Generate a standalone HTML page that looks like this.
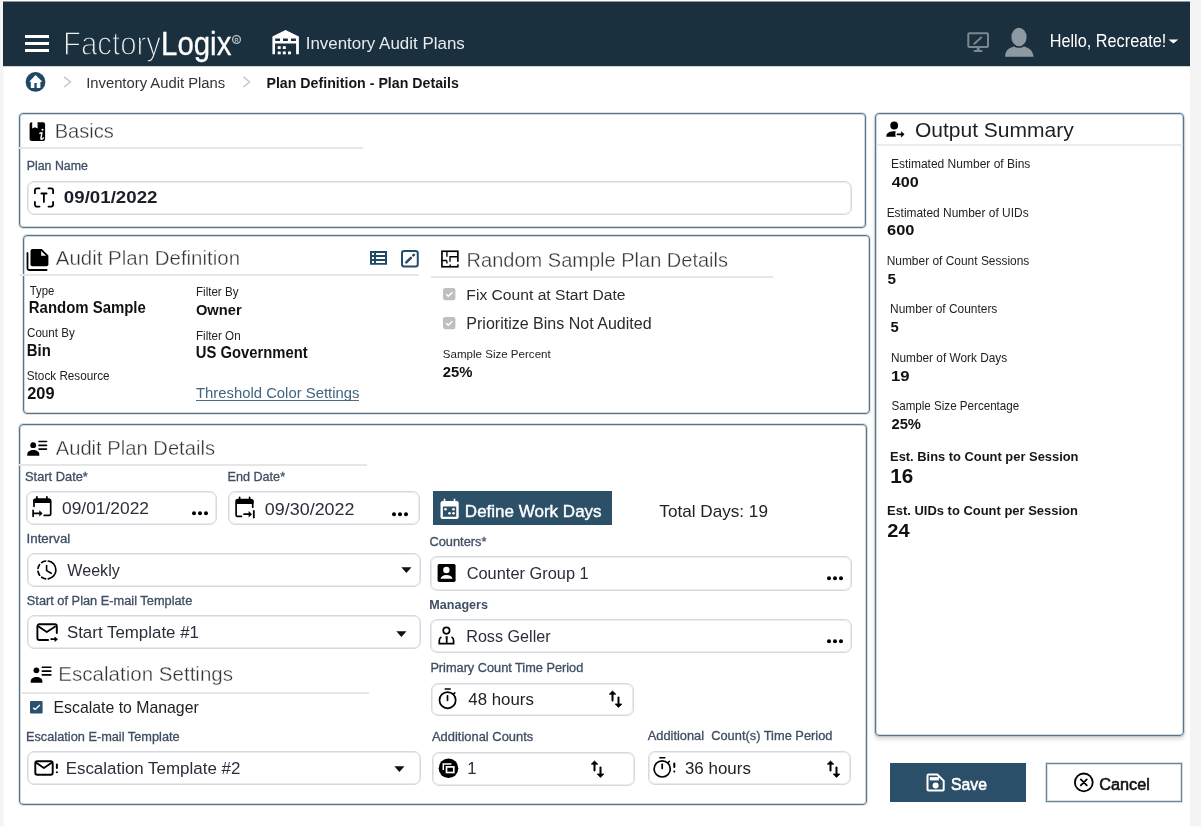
<!DOCTYPE html><html><head><meta charset="utf-8"><style>
html,body{margin:0;padding:0;width:1201px;height:826px;overflow:hidden;background:#f4f4f4;}
body{position:relative;font-family:"Liberation Sans", sans-serif;}
#w{position:absolute;left:0;top:0;width:1201px;height:826px;filter:blur(0.35px);}
.a{position:absolute;box-sizing:border-box;}
.t{position:absolute;line-height:1;white-space:pre;}
svg.a{overflow:visible;}
</style></head><body><div id="w">
<div class="a" style="left:3px;top:0px;width:1187px;height:826px;background:#fff;"></div>
<div class="a" style="left:3px;top:67px;width:1px;height:759px;background:#f9f9f9;"></div>
<div class="a" style="left:3px;top:2px;width:1187px;height:64px;background:#1b303e;"></div>
<div class="a" style="left:3px;top:1px;width:1187px;height:1px;background:#8d979e;"></div>
<div class="a" style="left:3px;top:66px;width:1187px;height:1px;background:#cfd4d7;"></div>
<div class="a" style="left:25px;top:35px;width:24px;height:2.799999999999997px;background:#fff;"></div>
<div class="a" style="left:25px;top:41.8px;width:24px;height:2.799999999999997px;background:#fff;"></div>
<div class="a" style="left:25px;top:48.8px;width:24px;height:2.799999999999997px;background:#fff;"></div>
<div class="t" style="left:63.0px;top:27.2px;font-size:33px;color:#eef1f3;transform:scaleX(0.891);transform-origin:0 0;"><span style="-webkit-text-stroke:1.3px #1b303e;paint-order:normal">Factory</span><span style="color:#fff;-webkit-text-stroke:0.3px #fff">Logix</span></div>
<svg class="a" style="left:231px;top:34px" width="11" height="11" viewBox="0 0 11 11"><circle cx="5.5" cy="5.5" r="3.9" fill="none" stroke="#b9c2c9" stroke-width="1.3"/><text x="5.6" y="7.6" font-size="5.5" text-anchor="middle" fill="#b9c2c9" font-family="Liberation Sans" font-weight="700">R</text></svg>
<svg class="a" style="left:265px;top:25px" width="40" height="35" viewBox="0 0 40 35"><path fill="#fff" d="M20.5 5.1 L33.9 11.4 V29.2 H31.1 V18.6 H10 V29.2 H7.4 V11.4 Z M10.2 13.6 V15.9 H15 V13.6 Z M18 13.6 V15.9 H22.9 V13.6 Z M26 13.6 V15.9 H30.9 V13.6 Z" fill-rule="evenodd"/>
<rect x="12.7" y="21.2" width="3" height="2.8" fill="#fff"/><rect x="17.8" y="21.2" width="3" height="2.8" fill="#fff"/>
<rect x="12.7" y="26.5" width="3" height="2.8" fill="#fff"/><rect x="17.8" y="26.5" width="3" height="2.8" fill="#fff"/><rect x="23" y="26.5" width="3" height="2.8" fill="#fff"/></svg>
<svg class="a" style="left:960px;top:22px" width="40" height="35" viewBox="0 0 40 35"><rect x="8.3" y="11.3" width="19.7" height="13.7" rx="1" fill="none" stroke="#7b868e" stroke-width="2"/>
<rect x="16.7" y="26" width="3" height="2.5" fill="#7b868e"/><rect x="13.7" y="28" width="8.6" height="2" fill="#7b868e"/>
<path d="M14.3 21.7 L21.2 15.5" stroke="#7b868e" stroke-width="2" stroke-linecap="round"/></svg>
<svg class="a" style="left:1000px;top:22px" width="40" height="40" viewBox="0 0 40 40"><ellipse cx="19" cy="15" rx="7.6" ry="9.3" fill="#8e9aa2"/>
<path d="M5 34.7 C5.5 29 8 26.5 12 25.2 L14 24.2 C16 26.2 22 26.2 24 24.2 L26 25.2 C30 26.5 32.8 29 33.6 34.7 Z" fill="#8e9aa2"/></svg>
<svg class="a" style="left:1168px;top:39px" width="11" height="5" viewBox="0 0 11 5"><path d="M0.5 0.4 H10.3 L5.4 4.6 Z" fill="#fff"/></svg>
<svg class="a" style="left:25px;top:71px" width="21" height="21" viewBox="0 0 21 21"><circle cx="10.5" cy="10.9" r="9.9" fill="#1e4864"/>
<path d="M10.6 3.9 L17.4 10.7 H15.4 V16.9 H11.7 V12.1 H9.4 V16.9 H5.8 V10.7 H4.2 Z" fill="#fff"/></svg>
<svg class="a" style="left:62px;top:75px" width="10" height="14" viewBox="0 0 10 14"><path d="M2.2 1.9 L8.4 7 L2.2 12" fill="none" stroke="#c9c9c9" stroke-width="1.6"/></svg>
<svg class="a" style="left:241px;top:75px" width="10" height="14" viewBox="0 0 10 14"><path d="M2.5 1.9 L8.5 7 L2.5 12" fill="none" stroke="#c9c9c9" stroke-width="1.6"/></svg>
<div class="a" style="left:19px;top:113px;width:847px;height:115px;border:1px solid #5a7588;border-radius:4px;box-shadow:0 0 0 1px rgba(90,117,136,0.22), inset 0 0 0 1px rgba(90,117,136,0.28);"></div>
<svg class="a" style="left:24px;top:116px" width="30" height="30" viewBox="0 0 30 30"><path d="M7.6 6.2 H8.2 V12.5 L10.9 11.2 L13.6 12.5 V6.2 H19.1 A2 2 0 0 1 21.1 8.2 V23.1 A2 2 0 0 1 19.1 25.1 H7.6 A2 2 0 0 1 5.6 23.1 V8.2 A2 2 0 0 1 7.6 6.2 Z" fill="#000"/>
<circle cx="18.5" cy="13.8" r="1.05" fill="#fff"/><path d="M15.9 17.4 Q16.9 16.6 18 16.6 L16.9 22.4 Q16.8 23.4 17.7 23.2 Q18.6 22.9 19.4 21.9" fill="none" stroke="#fff" stroke-width="1.45" stroke-linecap="round" stroke-linejoin="round"/></svg>
<div class="a" style="left:19px;top:147px;width:344px;height:2px;background:#e6e6e6;"></div>
<div class="a" style="left:26.8px;top:180.5px;width:825.7px;height:34.0px;border:1px solid #d6dae0;border-radius:7px;box-shadow:inset 0 0 0 1px rgba(200,206,214,0.4);"></div>
<svg class="a" style="left:28px;top:182px" width="32" height="30" viewBox="0 0 32 30"><path d="M6.9 11.2 V8.3 A2 2 0 0 1 8.9 6.3 H11.5 M20.5 6.3 H23.1 A2 2 0 0 1 25.1 8.3 V11.2 M25.1 19.8 V22.6 A2 2 0 0 1 23.1 24.6 H20.5 M11.5 24.6 H8.9 A2 2 0 0 1 6.9 22.6 V19.8" fill="none" stroke="#000" stroke-width="1.8" stroke-linecap="round"/><path d="M13.4 11.5 H18.6 M15.9 11.5 V19.9" fill="none" stroke="#000" stroke-width="1.8" stroke-linecap="round"/></svg>
<div class="a" style="left:23px;top:235px;width:847px;height:179px;border:1px solid #5a7588;border-radius:4px;box-shadow:0 0 0 1px rgba(90,117,136,0.22), inset 0 0 0 1px rgba(90,117,136,0.28);"></div>
<svg class="a" style="left:22px;top:244px" width="30" height="30" viewBox="0 0 30 30"><path d="M10.5 5 H19.8 L26.4 11.6 V20.3 A2 2 0 0 1 24.4 22.3 H10.5 A2 2 0 0 1 8.5 20.3 V7 A2 2 0 0 1 10.5 5 Z" fill="#000"/>
<path d="M19.2 7 V11.8 H24.1 Z" fill="#fff"/>
<path d="M5.5 9 V24.5 A1.5 1.5 0 0 0 7 26 H24.6" fill="none" stroke="#000" stroke-width="1.8" stroke-linecap="round"/></svg>
<div class="a" style="left:18.5px;top:274px;width:400.5px;height:2px;background:#e6e6e6;"></div>
<svg class="a" style="left:364px;top:244px" width="30" height="30" viewBox="0 0 30 30"><rect x="6" y="7" width="17" height="13.75" fill="#1e4a66"/>
<rect x="8" y="9" width="2" height="2" fill="#fff"/><rect x="12" y="9" width="9" height="2" fill="#fff"/>
<rect x="8" y="13" width="2" height="2" fill="#fff"/><rect x="12" y="13" width="9" height="2" fill="#fff"/>
<rect x="8" y="17" width="2" height="2" fill="#fff"/><rect x="12" y="17" width="9" height="2" fill="#fff"/></svg>
<svg class="a" style="left:394px;top:244px" width="30" height="30" viewBox="0 0 30 30"><rect x="8" y="7" width="15.75" height="15.5" rx="2.2" fill="none" stroke="#264c66" stroke-width="2"/>
<path d="M12.3 18.4 L16.9 13.8" stroke="#264c66" stroke-width="2.5" stroke-linecap="round"/><path d="M19.3 11.4 L19.9 10.8" stroke="#264c66" stroke-width="2.5" stroke-linecap="round"/></svg>
<div class="a" style="left:196.3px;top:400px;width:162.7px;height:1.3000000000000114px;background:#4a6e88;"></div>
<svg class="a" style="left:434px;top:244px" width="30" height="30" viewBox="0 0 30 30"><rect x="7.95" y="7.25" width="15.9" height="15.5" fill="none" stroke="#000" stroke-width="1.65"/>
<path d="M12.9 7.3 V12.7 M12.9 16.7 V19.6 M8 16.5 H12.9 M16 17.8 V12.7 H23 M16.2 20.4 V22.7" fill="none" stroke="#000" stroke-width="1.35"/>
<rect x="22.9" y="17.8" width="2" height="2.6" fill="#fff"/></svg>
<div class="a" style="left:430.7px;top:275.5px;width:342.3px;height:2.0px;background:#e6e6e6;"></div>
<svg class="a" style="left:442.8px;top:288.3px" width="13" height="13" viewBox="0 0 13 13"><rect x="0" y="0" width="12.4" height="12.2" rx="2.2" fill="#bfbfbf"/><path d="M3.2 6.3 L5.3 8.3 L9.4 4.2" fill="none" stroke="#fff" stroke-width="1.5"/></svg>
<svg class="a" style="left:442.8px;top:317.1px" width="13" height="13" viewBox="0 0 13 13"><rect x="0" y="0" width="12.4" height="12.2" rx="2.2" fill="#bfbfbf"/><path d="M3.2 6.3 L5.3 8.3 L9.4 4.2" fill="none" stroke="#fff" stroke-width="1.5"/></svg>
<div class="a" style="left:19px;top:424px;width:848px;height:381px;border:1px solid #5a7588;border-radius:4px;box-shadow:0 0 0 1px rgba(90,117,136,0.22), inset 0 0 0 1px rgba(90,117,136,0.28);"></div>
<svg class="a" style="left:22px;top:434px" width="30" height="30" viewBox="0 0 30 30"><circle cx="11.2" cy="11.2" r="2.9" fill="#000"/>
<path d="M5.25 21.7 V20.5 C5.25 17.5 8 15.9 11.3 15.9 C14.6 15.9 17.3 17.5 17.3 20.5 V21.7 Z" fill="#000"/>
<path d="M17 7.5 H24.5 M17 11.4 H24.5 M17 15.1 H24.5" stroke="#000" stroke-width="1.6" stroke-linecap="round"/></svg>
<div class="a" style="left:19px;top:463.5px;width:348px;height:2.0px;background:#e6e6e6;"></div>
<div class="a" style="left:25.5px;top:490.5px;width:191.5px;height:34.0px;border:1px solid #d6dae0;border-radius:7px;box-shadow:inset 0 0 0 1px rgba(200,206,214,0.4);"></div>
<svg class="a" style="left:28px;top:492px" width="30" height="30" viewBox="0 0 30 30"><path d="M6 14.3 V9 A1.8 1.8 0 0 1 7.8 7.2 H20.9 A1.8 1.8 0 0 1 22.7 9 V22 A1.5 1.5 0 0 1 21.2 23.4 H16.2" fill="none" stroke="#000" stroke-width="1.7" stroke-linecap="round"/>
<rect x="5.2" y="7.2" width="17.5" height="3.7" rx="1.2" fill="#000"/>
<path d="M8.9 4.8 V7.5 M18.9 4.8 V7.5" stroke="#000" stroke-width="1.7" stroke-linecap="round"/>
<path d="M5.1 18.3 V24.3 M5.5 21.4 H12.5" stroke="#000" stroke-width="1.7" stroke-linecap="round"/><path d="M11.3 18.2 L14.6 21.4 L11.3 24.6 Z" fill="#000"/></svg>
<svg class="a" style="left:191.8px;top:511.1px" width="18" height="5" viewBox="0 0 18 5"><circle cx="2" cy="2.3" r="2" fill="#000"/><circle cx="8" cy="2.3" r="2" fill="#000"/><circle cx="14" cy="2.3" r="2" fill="#000"/></svg>
<div class="a" style="left:228.3px;top:491.3px;width:191.5px;height:33.99999999999994px;border:1px solid #d6dae0;border-radius:7px;box-shadow:inset 0 0 0 1px rgba(200,206,214,0.4);"></div>
<svg class="a" style="left:230px;top:492px" width="30" height="30" viewBox="0 0 30 30"><path d="M22.7 15.2 V9.4 A1.8 1.8 0 0 0 20.9 7.6 H7.9 A1.8 1.8 0 0 0 6.1 9.4 V22.9 A1.5 1.5 0 0 0 7.6 24.4 H11.5" fill="none" stroke="#000" stroke-width="1.7" stroke-linecap="round"/>
<rect x="6.1" y="7.6" width="17.5" height="4.4" rx="1.2" fill="#000"/>
<path d="M9.6 5.3 V8 M19.6 5.3 V8" stroke="#000" stroke-width="1.7" stroke-linecap="round"/>
<path d="M14 22.2 H20" stroke="#000" stroke-width="1.7" stroke-linecap="round"/><path d="M18.6 18.9 L22 22.2 L18.6 25.6 Z" fill="#000"/><path d="M23.8 19 V25.6" stroke="#000" stroke-width="1.8" stroke-linecap="round"/></svg>
<svg class="a" style="left:392px;top:512px" width="18" height="5" viewBox="0 0 18 5"><circle cx="2" cy="2.3" r="2" fill="#000"/><circle cx="8" cy="2.3" r="2" fill="#000"/><circle cx="14" cy="2.3" r="2" fill="#000"/></svg>
<div class="a" style="left:27.2px;top:552.6px;width:394.3px;height:34.39999999999998px;border:1px solid #d6dae0;border-radius:7px;box-shadow:inset 0 0 0 1px rgba(200,206,214,0.4);"></div>
<svg class="a" style="left:32px;top:556px" width="30" height="30" viewBox="0 0 30 30"><path d="M16.31 5.01 A9.0 9.0 0 0 1 16.31 22.79 M9.61 6.62 A9.0 9.0 0 0 1 13.65 4.99 M6.01 12.49 A9.0 9.0 0 0 1 7.53 8.74 M7.62 19.19 A9.0 9.0 0 0 1 6.01 15.31 M13.65 22.81 A9.0 9.0 0 0 1 9.74 21.27" fill="none" stroke="#000" stroke-width="1.7" stroke-linecap="round"/><path d="M14.6 9.5 V14.6 L19.2 17.3" fill="none" stroke="#000" stroke-width="1.6" stroke-linecap="round" stroke-linejoin="round"/></svg>
<svg class="a" style="left:401px;top:567.2px" width="12" height="7" viewBox="0 0 12 7"><path d="M0.3 0.3 H10.5 L5.4 6 Z" fill="#111"/></svg>
<div class="a" style="left:27.2px;top:615.2px;width:394.3px;height:34.299999999999955px;border:1px solid #d6dae0;border-radius:7px;box-shadow:inset 0 0 0 1px rgba(200,206,214,0.4);"></div>
<svg class="a" style="left:32px;top:620px" width="30" height="26" viewBox="0 0 30 26"><path d="M16.1 20 H7.4 A2 2 0 0 1 5.4 18 V6.3 A2 2 0 0 1 7.4 4.3 H22.8 A2 2 0 0 1 24.8 6.3 V13" fill="none" stroke="#000" stroke-width="1.9" stroke-linecap="round"/>
<path d="M6.2 6.2 L14.8 12 L23.6 6.2" fill="none" stroke="#000" stroke-width="1.8" stroke-linejoin="round"/>
<path d="M19.2 19.2 H23.6" stroke="#000" stroke-width="1.7" stroke-linecap="round"/><path d="M22.9 17 L25.6 19.2 L22.9 21.5 Z" fill="#000" stroke="#000" stroke-width="0.6" stroke-linejoin="round"/></svg>
<svg class="a" style="left:396px;top:630.5px" width="12" height="7" viewBox="0 0 12 7"><path d="M0.3 0.3 H10.5 L5.4 6 Z" fill="#111"/></svg>
<svg class="a" style="left:22px;top:660px" width="32" height="30" viewBox="0 0 32 30"><circle cx="14.4" cy="10.3" r="2.9" fill="#000"/>
<path d="M8.7 22.7 V21.5 C8.7 18.5 11.3 16.9 14.5 16.9 C17.7 16.9 20.4 18.5 20.4 21.5 V22.7 Z" fill="#000"/>
<path d="M20.3 7.3 H28.9 M20.3 11.1 H28.9 M20.3 14.9 H28.9" stroke="#000" stroke-width="1.6" stroke-linecap="round"/></svg>
<div class="a" style="left:22px;top:691.5px;width:347px;height:2.0px;background:#e6e6e6;"></div>
<svg class="a" style="left:30.2px;top:701.2px" width="13" height="13" viewBox="0 0 13 13"><rect x="0" y="0" width="12.6" height="12.6" rx="1" fill="#2a5270"/><path d="M3.2 6.9 L5.2 8.4 L9.9 3.9" fill="none" stroke="#fff" stroke-width="1.4"/></svg>
<div class="a" style="left:26.5px;top:750.8px;width:394.3px;height:34.40000000000009px;border:1px solid #d6dae0;border-radius:7px;box-shadow:inset 0 0 0 1px rgba(200,206,214,0.4);"></div>
<svg class="a" style="left:30px;top:754px" width="32" height="28" viewBox="0 0 32 28"><rect x="5.3" y="7.2" width="17.4" height="13.6" rx="2" fill="none" stroke="#000" stroke-width="1.9"/>
<path d="M5.9 8.5 L13.9 14 L22 8.5" fill="none" stroke="#000" stroke-width="1.8" stroke-linejoin="round"/>
<path d="M26.9 10.5 V13.9" stroke="#000" stroke-width="2" stroke-linecap="round"/><circle cx="26.9" cy="18.3" r="1.05" fill="#000"/></svg>
<svg class="a" style="left:393.5px;top:766px" width="12" height="7" viewBox="0 0 12 7"><path d="M0.3 0.3 H10.5 L5.4 6 Z" fill="#111"/></svg>
<svg class="a" style="left:432.6px;top:491px" width="179" height="34" viewBox="0 0 179 34"><rect x="0" y="0" width="179" height="34" fill="#2b5068"/></svg>
<svg class="a" style="left:436px;top:494px" width="30" height="30" viewBox="0 0 30 30"><path d="M6.5 7.1 H20.7 A2 2 0 0 1 22.7 9.1 V23.1 A2 2 0 0 1 20.7 25.1 H6.5 A2 2 0 0 1 4.5 23.1 V9.1 A2 2 0 0 1 6.5 7.1 Z M6.9 12.4 V22.7 H20.2 V12.4 Z" fill="#fff" fill-rule="evenodd"/>
<path d="M8.5 5.2 V7.6 M18.5 5.2 V7.6" stroke="#fff" stroke-width="1.6" stroke-linecap="round"/>
<circle cx="9.5" cy="15.3" r="1.3" fill="#fff"/><circle cx="17.5" cy="15.3" r="1.3" fill="#fff"/><circle cx="13.5" cy="19.3" r="1.3" fill="#fff"/><circle cx="17.5" cy="19.3" r="1.3" fill="#fff"/></svg>
<div class="a" style="left:429.6px;top:556.2px;width:422.9px;height:34.59999999999991px;border:1px solid #d6dae0;border-radius:7px;box-shadow:inset 0 0 0 1px rgba(200,206,214,0.4);"></div>
<svg class="a" style="left:432px;top:560px" width="30" height="28" viewBox="0 0 30 28"><rect x="5.6" y="4.1" width="18" height="17.8" rx="1.6" fill="#000"/>
<circle cx="14.4" cy="10" r="3.2" fill="#fff"/><path d="M8.5 18.8 C8.9 16.3 11.3 14.9 14.5 14.9 C17.7 14.9 20.1 16.3 20.6 18.8 Z" fill="#fff"/></svg>
<svg class="a" style="left:827px;top:576.2px" width="18" height="5" viewBox="0 0 18 5"><circle cx="2" cy="2.3" r="2" fill="#000"/><circle cx="8" cy="2.3" r="2" fill="#000"/><circle cx="14" cy="2.3" r="2" fill="#000"/></svg>
<div class="a" style="left:429.6px;top:618.6px;width:422.9px;height:34.60000000000002px;border:1px solid #d6dae0;border-radius:7px;box-shadow:inset 0 0 0 1px rgba(200,206,214,0.4);"></div>
<svg class="a" style="left:432px;top:622px" width="30" height="28" viewBox="0 0 30 28"><circle cx="14.4" cy="8.6" r="3.2" fill="none" stroke="#000" stroke-width="1.7"/>
<path d="M9.4 15 C7.8 15.8 7.3 17 7.3 18.5 V21.7 H21.6 V18.5 C21.6 17 21.1 15.8 19.5 15" fill="none" stroke="#000" stroke-width="1.7"/>
<path d="M13.6 14.2 H15.8 L15.4 21.7 H14 Z" fill="#000"/></svg>
<svg class="a" style="left:827px;top:638.6px" width="18" height="5" viewBox="0 0 18 5"><circle cx="2" cy="2.3" r="2" fill="#000"/><circle cx="8" cy="2.3" r="2" fill="#000"/><circle cx="14" cy="2.3" r="2" fill="#000"/></svg>
<div class="a" style="left:430.7px;top:682.6px;width:203.3px;height:33.89999999999998px;border:1px solid #d6dae0;border-radius:7px;box-shadow:inset 0 0 0 1px rgba(200,206,214,0.4);"></div>
<svg class="a" style="left:434px;top:684px" width="30" height="30" viewBox="0 0 30 30"><circle cx="13.6" cy="16.2" r="8.1" fill="none" stroke="#000" stroke-width="1.7"/>
<path d="M11.2 5.1 H16.2" stroke="#000" stroke-width="1.5" stroke-linecap="round"/>
<path d="M19.3 10.2 L20.8 8.8" stroke="#000" stroke-width="1.6" stroke-linecap="round"/>
<path d="M13.5 11.8 V16.3" stroke="#000" stroke-width="1.7" stroke-linecap="round"/></svg>
<svg class="a" style="left:600px;top:684px" width="30" height="30" viewBox="0 0 30 30"><path d="M12.5 16.5 V9" stroke="#000" stroke-width="2" stroke-linecap="round"/><path d="M9.3 10.2 L12.5 7 L15.8 10.2 Z" fill="#000" stroke="#000" stroke-width="0.8" stroke-linejoin="round"/>
<path d="M18.5 13.5 V21" stroke="#000" stroke-width="2" stroke-linecap="round"/><path d="M15.2 20 L18.5 23.4 L21.8 20 Z" fill="#000" stroke="#000" stroke-width="0.8" stroke-linejoin="round"/></svg>
<div class="a" style="left:431.5px;top:751.5px;width:203.5px;height:34.0px;border:1px solid #d6dae0;border-radius:7px;box-shadow:inset 0 0 0 1px rgba(200,206,214,0.4);"></div>
<svg class="a" style="left:434px;top:754px" width="30" height="30" viewBox="0 0 30 30"><circle cx="14.5" cy="14.2" r="9.8" fill="#000"/>
<path d="M9.3 16 V9.9 H17.4" fill="none" stroke="#fff" stroke-width="1.5"/>
<rect x="12.5" y="12.9" width="7.3" height="5.6" fill="none" stroke="#fff" stroke-width="1.7"/></svg>
<svg class="a" style="left:582px;top:754px" width="30" height="30" viewBox="0 0 30 30"><path d="M12.5 16.5 V9" stroke="#000" stroke-width="2" stroke-linecap="round"/><path d="M9.3 10.2 L12.5 7 L15.8 10.2 Z" fill="#000" stroke="#000" stroke-width="0.8" stroke-linejoin="round"/>
<path d="M18.5 13.5 V21" stroke="#000" stroke-width="2" stroke-linecap="round"/><path d="M15.2 20 L18.5 23.4 L21.8 20 Z" fill="#000" stroke="#000" stroke-width="0.8" stroke-linejoin="round"/></svg>
<div class="a" style="left:647.9px;top:750.7px;width:203.10000000000002px;height:34.299999999999955px;border:1px solid #d6dae0;border-radius:7px;box-shadow:inset 0 0 0 1px rgba(200,206,214,0.4);"></div>
<svg class="a" style="left:648px;top:754px" width="34" height="30" viewBox="0 0 34 30"><circle cx="14.2" cy="14.9" r="8.1" fill="none" stroke="#000" stroke-width="1.7"/>
<path d="M11.9 3.7 H16.8" stroke="#000" stroke-width="1.5" stroke-linecap="round"/>
<path d="M20 8.7 L21.4 7.3" stroke="#000" stroke-width="1.6" stroke-linecap="round"/>
<path d="M14.2 10.3 V14.5" stroke="#000" stroke-width="1.7" stroke-linecap="round"/>
<path d="M26.3 9.5 V13" stroke="#000" stroke-width="2" stroke-linecap="round"/><circle cx="26.3" cy="17.6" r="1" fill="#000"/></svg>
<svg class="a" style="left:818px;top:754px" width="30" height="30" viewBox="0 0 30 30"><path d="M12.5 16.5 V9" stroke="#000" stroke-width="2" stroke-linecap="round"/><path d="M9.3 10.2 L12.5 7 L15.8 10.2 Z" fill="#000" stroke="#000" stroke-width="0.8" stroke-linejoin="round"/>
<path d="M18.5 13.5 V21" stroke="#000" stroke-width="2" stroke-linecap="round"/><path d="M15.2 20 L18.5 23.4 L21.8 20 Z" fill="#000" stroke="#000" stroke-width="0.8" stroke-linejoin="round"/></svg>
<div class="a" style="left:875px;top:113px;width:309px;height:623px;border:1px solid #5a7588;border-radius:4px;box-shadow:0 0 0 1px rgba(90,117,136,0.22), inset 0 0 0 1px rgba(90,117,136,0.28), 0 3px 4px rgba(0,0,0,0.16);"></div>
<svg class="a" style="left:880px;top:116px" width="30" height="28" viewBox="0 0 30 28"><circle cx="14.2" cy="9.5" r="3.9" fill="#000"/>
<path d="M6.3 20.7 C6.3 17.2 8.5 15.3 15.8 15.3 C15.2 16.8 15.2 19.2 15.8 20.7 Z" fill="#000"/>
<path d="M17.4 18.3 H22" stroke="#000" stroke-width="1.8" stroke-linecap="round"/><path d="M21.3 15.7 L24.2 18.3 L21.3 21 Z" fill="#000" stroke="#000" stroke-width="0.6" stroke-linejoin="round"/></svg>
<div class="a" style="left:877px;top:144px;width:306px;height:2px;background:#ececec;"></div>
<div class="a" style="left:890.3px;top:763px;width:136.0px;height:39px;background:#2b4f68;"></div>
<svg class="a" style="left:920px;top:768px" width="30" height="30" viewBox="0 0 30 30"><path d="M8.5 6.5 H17.3 L23.7 12.9 V21.6 A1 1 0 0 1 22.7 22.6 H8.5 A1 1 0 0 1 7.5 21.6 V7.5 A1 1 0 0 1 8.5 6.5 Z" fill="none" stroke="#fff" stroke-width="2"/>
<rect x="9.8" y="9.1" width="9.1" height="3.3" fill="#fff"/><circle cx="15.6" cy="17.5" r="3" fill="#fff"/></svg>
<div class="a" style="left:1046px;top:763px;width:136px;height:39px;border:1px solid #6a8494;background:#fff;box-shadow:0 0 0 1px rgba(106,132,148,0.25), inset 0 0 0 1px rgba(106,132,148,0.25);"></div>
<svg class="a" style="left:1068px;top:768px" width="30" height="30" viewBox="0 0 30 30"><circle cx="15.8" cy="14.4" r="8.9" fill="none" stroke="#000" stroke-width="1.8"/>
<path d="M12.8 11.4 L18.8 17.4 M18.8 11.4 L12.8 17.4" stroke="#000" stroke-width="1.8" stroke-linecap="round"/></svg>
<svg class="a" style="left:0;top:0;white-space:pre" width="1201" height="826" font-family="Liberation Sans, sans-serif"><text transform="translate(305.68,48.50) scale(1.0403,1)" font-size="16.279" fill="#e8ebee">Inventory Audit Plans</text>
<text transform="translate(1049.70,47.40) scale(0.9107,1)" font-size="17.878" fill="#ffffff">Hello, Recreate!</text>
<text transform="translate(86.17,87.50) scale(1.0191,1)" font-size="14.535" fill="#333">Inventory Audit Plans</text>
<text transform="translate(266.45,87.80) scale(0.9871,1)" font-size="14.390" fill="#161616" font-weight="700">Plan Definition - Plan Details</text>
<text transform="translate(54.69,138.20) scale(0.9740,1)" font-size="20.640" fill="#333333" stroke="#fff" stroke-width="0.35">Basics</text>
<text transform="translate(26.76,170.25) scale(1.0122,1)" font-size="12.209" fill="#3f4f64" stroke="#3f4f64" stroke-width="0.3">Plan Name</text>
<text transform="translate(63.84,203.10) scale(1.1368,1)" font-size="16.476" fill="#1b1d29" font-weight="700">09/01/2022</text>
<text transform="translate(55.80,265.10) scale(1.0356,1)" font-size="19.767" fill="#333333" stroke="#fff" stroke-width="0.35">Audit Plan Definition</text>
<text transform="translate(29.77,294.60) scale(0.9535,1)" font-size="11.919" fill="#222">Type</text>
<text transform="translate(28.80,313.00) scale(0.9433,1)" font-size="15.843" fill="#111" font-weight="700">Random Sample</text>
<text transform="translate(27.02,336.50) scale(0.9726,1)" font-size="11.919" fill="#222">Count By</text>
<text transform="translate(26.86,355.60) scale(0.9319,1)" font-size="15.988" fill="#111" font-weight="700">Bin</text>
<text transform="translate(26.78,380.25) scale(0.9735,1)" font-size="12.064" fill="#222">Stock Resource</text>
<text transform="translate(27.26,398.75) scale(1.0376,1)" font-size="15.759" fill="#111" font-weight="700">209</text>
<text transform="translate(195.97,296.25) scale(0.9613,1)" font-size="12.064" fill="#222">Filter By</text>
<text transform="translate(195.91,314.75) scale(0.9457,1)" font-size="15.537" fill="#111" font-weight="700">Owner</text>
<text transform="translate(195.97,339.75) scale(0.9661,1)" font-size="12.064" fill="#222">Filter On</text>
<text transform="translate(195.81,358.40) scale(0.9349,1)" font-size="15.843" fill="#111" font-weight="700">US Government</text>
<text transform="translate(196.00,397.70) scale(1.0218,1)" font-size="14.535" fill="#3f6580">Threshold Color Settings</text>
<text transform="translate(466.60,266.60) scale(0.9569,1)" font-size="20.930" fill="#333333" stroke="#fff" stroke-width="0.35">Random Sample Plan Details</text>
<text transform="translate(466.35,300.10) scale(1.0072,1)" font-size="15.552" fill="#2b2b2b">Fix Count at Start Date</text>
<text transform="translate(466.32,328.80) scale(1.0210,1)" font-size="15.698" fill="#2b2b2b">Prioritize Bins Not Audited</text>
<text transform="translate(442.74,357.80) scale(1.0113,1)" font-size="11.441" fill="#222">Sample Size Percent</text>
<text transform="translate(442.75,376.60) scale(0.9959,1)" font-size="14.915" fill="#111" font-weight="700">25%</text>
<text transform="translate(55.70,455.40) scale(0.9785,1)" font-size="20.640" fill="#333333" stroke="#fff" stroke-width="0.35">Audit Plan Details</text>
<text transform="translate(24.99,480.50) scale(1.0593,1)" font-size="12.147" fill="#3f4f64" stroke="#3f4f64" stroke-width="0.3">Start Date*</text>
<text transform="translate(227.59,481.10) scale(1.0214,1)" font-size="12.355" fill="#3f4f64" stroke="#3f4f64" stroke-width="0.3">End Date*</text>
<text transform="translate(61.98,513.70) scale(1.0522,1)" font-size="16.525" fill="#2a2e3a">09/01/2022</text>
<text transform="translate(264.86,514.80) scale(1.0659,1)" font-size="16.808" fill="#2a2e3a">09/30/2022</text>
<text transform="translate(26.50,543.00) scale(1.0694,1)" font-size="12.500" fill="#3f4f64" stroke="#3f4f64" stroke-width="0.3">Interval</text>
<text transform="translate(67.30,575.60) scale(0.9804,1)" font-size="16.424" fill="#2a2e3a">Weekly</text>
<text transform="translate(26.79,605.00) scale(1.0077,1)" font-size="12.712" fill="#3f4f64" stroke="#3f4f64" stroke-width="0.3">Start of Plan E-mail Template</text>
<text transform="translate(66.92,637.90) scale(1.0589,1)" font-size="15.960" fill="#2a2e3a">Start Template #1</text>
<text transform="translate(58.26,681.30) scale(1.0472,1)" font-size="19.633" fill="#333333" stroke="#fff" stroke-width="0.35">Escalation Settings</text>
<text transform="translate(53.53,712.80) scale(0.9907,1)" font-size="15.988" fill="#222">Escalate to Manager</text>
<text transform="translate(25.98,741.40) scale(0.9988,1)" font-size="12.791" fill="#3f4f64" stroke="#3f4f64" stroke-width="0.3">Escalation E-mail Template</text>
<text transform="translate(65.64,774.40) scale(0.9876,1)" font-size="17.151" fill="#2a2e3a">Escalation Template #2</text>
<text transform="translate(464.84,517.10) scale(1.0185,1)" font-size="16.715" fill="#ffffff" stroke="#fff" stroke-width="0.4">Define Work Days</text>
<text transform="translate(659.36,517.00) scale(1.0081,1)" font-size="17.006" fill="#222">Total Days: 19</text>
<text transform="translate(429.46,545.90) scale(1.0564,1)" font-size="12.147" fill="#3f4f64" stroke="#3f4f64" stroke-width="0.3">Counters*</text>
<text transform="translate(466.68,579.20) scale(1.0178,1)" font-size="16.102" fill="#2a2e3a">Counter Group 1</text>
<text transform="translate(429.35,608.50) scale(1.0061,1)" font-size="12.500" fill="#3f4f64" font-weight="700">Managers</text>
<text transform="translate(466.21,641.50) scale(0.9763,1)" font-size="16.570" fill="#2a2e3a">Ross Geller</text>
<text transform="translate(430.38,672.00) scale(1.0440,1)" font-size="12.209" fill="#3f4f64" stroke="#3f4f64" stroke-width="0.3">Primary Count Time Period</text>
<text transform="translate(468.26,705.00) scale(1.0328,1)" font-size="16.332" fill="#222">48 hours</text>
<text transform="translate(432.00,740.90) scale(1.0594,1)" font-size="12.209" fill="#3f4f64" stroke="#3f4f64" stroke-width="0.3">Additional Counts</text>
<text transform="translate(467.13,774.10) scale(1.0000,1)" font-size="16.715" fill="#2a2e3a">1</text>
<text transform="translate(647.70,740.20) scale(1.0531,1)" font-size="12.209" fill="#3f4f64" stroke="#3f4f64" stroke-width="0.3">Additional&#160; Count(s) Time Period</text>
<text transform="translate(684.89,774.10) scale(1.0444,1)" font-size="16.243" fill="#222">36 hours</text>
<text transform="translate(914.96,136.90) scale(1.0478,1)" font-size="20.056" fill="#1f1f1f">Output Summary</text>
<text transform="translate(890.94,168.10) scale(0.9602,1)" font-size="12.500" fill="#222">Estimated Number of Bins</text>
<text transform="translate(891.74,186.80) scale(1.0395,1)" font-size="15.537" fill="#111" font-weight="700">400</text>
<text transform="translate(886.64,216.60) scale(0.9553,1)" font-size="12.500" fill="#222">Estimated Number of UIDs</text>
<text transform="translate(887.11,235.30) scale(1.0760,1)" font-size="15.254" fill="#111" font-weight="700">600</text>
<text transform="translate(886.64,265.30) scale(0.9680,1)" font-size="12.355" fill="#222">Number of Count Sessions</text>
<text transform="translate(887.54,283.90) scale(1.0000,1)" font-size="15.254" fill="#111" font-weight="700">5</text>
<text transform="translate(890.05,313.30) scale(0.9879,1)" font-size="12.064" fill="#222">Number of Counters</text>
<text transform="translate(890.56,332.00) scale(1.0000,1)" font-size="14.831" fill="#111" font-weight="700">5</text>
<text transform="translate(890.95,362.00) scale(0.9820,1)" font-size="12.064" fill="#222">Number of Work Days</text>
<text transform="translate(890.90,380.60) scale(1.1228,1)" font-size="14.900" fill="#111" font-weight="700">19</text>
<text transform="translate(891.43,410.30) scale(0.9639,1)" font-size="12.064" fill="#222">Sample Size Percentage</text>
<text transform="translate(891.46,428.90) scale(0.9986,1)" font-size="14.773" fill="#111" font-weight="700">25%</text>
<text transform="translate(890.03,460.60) scale(0.9551,1)" font-size="13.517" fill="#161616" font-weight="700">Est. Bins to Count per Session</text>
<text transform="translate(890.16,483.40) scale(1.0607,1)" font-size="19.484" fill="#111" font-weight="700">16</text>
<text transform="translate(887.12,514.80) scale(0.9590,1)" font-size="13.517" fill="#161616" font-weight="700">Est. UIDs to Count per Session</text>
<text transform="translate(887.30,537.00) scale(1.0694,1)" font-size="18.768" fill="#111" font-weight="700">24</text>
<text transform="translate(951.07,789.90) scale(0.9371,1)" font-size="16.808" fill="#ffffff" stroke="#fff" stroke-width="0.6">Save</text>
<text transform="translate(1099.19,789.90) scale(0.9438,1)" font-size="17.232" fill="#111" stroke="#111" stroke-width="0.6">Cancel</text></svg>
</div></body></html>
